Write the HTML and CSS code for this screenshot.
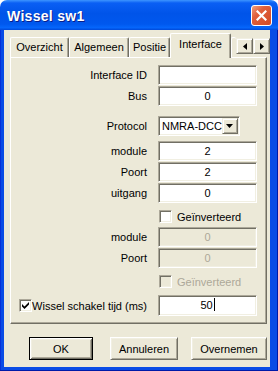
FILE: index.html
```html
<!DOCTYPE html>
<html lang="nl">
<head>
  <meta charset="UTF-8">
  <title>Wissel sw1</title>
  <link rel="stylesheet" href="styles.css">
</head>
<body>
  <div class="window">
    <div class="titlebar">
      <span class="title">Wissel sw1</span>
      <span class="close">
        <svg width="11" height="11" viewBox="0 0 11 11"><path d="M1.5 1.5 L9.5 9.5 M9.5 1.5 L1.5 9.5" stroke="#fff" stroke-width="2.2" stroke-linecap="square"/></svg>
      </span>
    </div>
    <div class="frame">
      <div class="client">
        <div class="tabstrip">
          <div class="tab t1">Overzicht</div>
          <div class="tab t2">Algemeen</div>
          <div class="tab t3">Positie</div>
          <div class="tab active t4">Interface</div>
          <div class="tab t5"></div>
          <div class="spin">
            <span class="spin-btn"><svg width="4" height="7" viewBox="0 0 4 7"><path d="M4 0 L0 3.5 L4 7 Z" fill="#000"/></svg></span>
            <span class="spin-btn"><svg width="4" height="7" viewBox="0 0 4 7"><path d="M0 0 L4 3.5 L0 7 Z" fill="#000"/></svg></span>
          </div>
        </div>

        <div class="panel">
          <div class="row r-id"><label>Interface ID</label><div class="field"></div></div>
          <div class="row r-bus"><label>Bus</label><div class="field">0</div></div>
          <div class="row r-proto">
            <label>Protocol</label>
            <div class="combo">
              <span class="combo-text">NMRA-DCC</span>
              <span class="combo-btn"><svg width="7" height="4" viewBox="0 0 7 4"><path d="M0 0 L7 0 L3.5 4 Z" fill="#000"/></svg></span>
            </div>
          </div>
          <div class="row r-mod"><label>module</label><div class="field">2</div></div>
          <div class="row r-poort"><label>Poort</label><div class="field">2</div></div>
          <div class="row r-uit"><label>uitgang</label><div class="field">0</div></div>
          <div class="row r-cb1"><label></label><div class="check"><span class="box"></span>Geïnverteerd</div></div>
          <div class="row r-mod2"><label>module</label><div class="field disabled">0</div></div>
          <div class="row r-poort2"><label>Poort</label><div class="field disabled">0</div></div>
          <div class="row r-cb2"><label></label><div class="check disabled"><span class="box"></span>Geïnverteerd</div></div>
          <div class="row r-tijd">
            <label class="with-check">
              <span class="box checked"><svg width="7" height="7" viewBox="0 0 7 7"><path d="M0 2 L0 4.5 L2.5 7 L7 2.5 L7 0 L2.5 4.5 Z" fill="#000"/></svg></span>
              <span>Wissel schakel tijd (ms)</span>
            </label>
            <div class="field tall">50<span class="caret"></span></div>
          </div>
        </div>

        <div class="buttons">
          <div class="btn default b-ok">OK</div>
          <div class="btn b-cancel">Annuleren</div>
          <div class="btn b-apply">Overnemen</div>
        </div>
      </div>
    </div>
  </div>
</body>
</html>
```

FILE: styles.css
```css
:root {
  --face: #ece9d8;
  --light: #f1efe2;
  --shadow: #aca899;
  --dark: #716f64;
  --xp-blue: #0a4ce6;
}

body {
  margin: 0;
  padding: 0;
  background: #fff;
  font-family: "Liberation Sans", Arial, sans-serif;
  font-size: 11px;
  color: #000;
}

.window {
  width: 278px;
  height: 371px;
  display: flex;
  flex-direction: column;
}

/* title bar */
.titlebar {
  height: 30px;
  flex: none;
  display: flex;
  align-items: center;
  justify-content: space-between;
  padding: 0 6px 0 7px;
  box-sizing: border-box;
  border-radius: 7px 7px 0 0;
  background: linear-gradient(#3d95ff 0%, #0a5ff4 10%, #0054e9 45%, #0058ee 80%, #0566fb 92%, #0049d9 100%);
}

.title {
  color: #fff;
  font-weight: bold;
  font-size: 14px;
  letter-spacing: 0.3px;
  text-shadow: 1px 1px #0a1e8a;
  margin-top: 1px;
}

.close {
  width: 21px;
  height: 21px;
  box-sizing: border-box;
  border: 1px solid #fff;
  border-radius: 3px;
  background: linear-gradient(135deg, #f0a080 0%, #e0603c 35%, #d24a25 100%);
  display: flex;
  align-items: center;
  justify-content: center;
  margin-top: 1px;
}

/* window frame */
.frame {
  flex: 1;
  display: flex;
  background: var(--xp-blue);
  padding: 0 8px 4px 4px;
  box-shadow: inset -1px -1px #0019a8, inset 1px 0 #0831d9;
}

.client {
  flex: 1;
  background: var(--face);
  display: flex;
  flex-direction: column;
}

/* tabs */
.tabstrip {
  height: 27px;
  display: flex;
  align-items: flex-end;
  padding-left: 6px;
  position: relative;
  z-index: 1;
  white-space: nowrap;
}

.tab {
  height: 20px;
  box-sizing: border-box;
  border-top: 1px solid #fff;
  border-left: 1px solid #fff;
  border-right: 1px solid var(--dark);
  border-radius: 2px 2px 0 0;
  box-shadow: inset -1px 0 var(--shadow);
  padding: 3px 0 0;
  text-align: center;
  background: var(--face);
}

.t1 { width: 59px; }
.t2 { width: 60px; }
.t3 { width: 41px; }
.t4 { width: 61px; }
.t5 { width: 5px; border-right: none; box-shadow: none; }

.tab.active {
  height: 25px;
  padding-top: 4px;
  margin-bottom: -1px;
}

.spin {
  display: flex;
  align-self: flex-start;
  margin-top: 8px;
}

.spin-btn {
  width: 17px;
  height: 16px;
  box-sizing: border-box;
  border: 1px solid;
  border-color: var(--light) var(--dark) var(--dark) var(--light);
  box-shadow: inset 1px 1px #fff, inset -1px -1px var(--shadow);
  display: flex;
  align-items: center;
  justify-content: center;
  background: var(--face);
}

/* panel */
.panel {
  width: 257px;
  height: 267px;
  margin-left: 6px;
  box-sizing: border-box;
  border: 1px solid;
  border-color: #fff var(--dark) var(--dark) #fff;
  box-shadow: inset -1px -1px var(--shadow);
  display: flex;
  flex-direction: column;
  padding-top: 7px;
}

.row {
  display: grid;
  grid-template-columns: 136px 99px;
  column-gap: 11px;
  align-items: center;
  height: 20px;
  margin-top: 1px;
  white-space: nowrap;
}

.row label {
  text-align: right;
}

.r-id { margin-top: 0; }
.r-proto { margin-top: 9px; height: 21px; }
.r-mod { margin-top: 5px; }
.r-cb1 { margin-top: 5px; height: 17px; }
.r-mod2 { margin-top: 2px; }
.r-cb2 { margin-top: 5px; height: 17px; }
.r-tijd { margin-top: 5px; height: 21px; }

.field {
  height: 20px;
  box-sizing: border-box;
  background: #fff;
  border: 1px solid;
  border-color: var(--shadow) #fff #fff var(--shadow);
  box-shadow: inset 1px 1px var(--dark), inset -1px -1px var(--light);
  text-align: center;
  line-height: 18px;
}

.field.tall {
  height: 21px;
  line-height: 19px;
}

.field.disabled {
  background: var(--face);
  color: var(--shadow);
}

.caret {
  display: inline-block;
  width: 1px;
  height: 13px;
  background: #000;
  vertical-align: -2px;
  margin-left: 1px;
}

.combo {
  width: 82px;
  height: 20px;
  box-sizing: border-box;
  background: #fff;
  border: 1px solid;
  border-color: var(--shadow) #fff #fff var(--shadow);
  box-shadow: inset 1px 1px var(--dark), inset -1px -1px var(--light);
  display: flex;
  align-items: center;
  justify-content: space-between;
  padding: 2px;
}

.combo-text {
  padding-left: 1px;
  white-space: nowrap;
}

.combo-btn {
  width: 16px;
  height: 16px;
  flex: none;
  box-sizing: border-box;
  border: 1px solid;
  border-color: var(--light) var(--dark) var(--dark) var(--light);
  box-shadow: inset 1px 1px #fff, inset -1px -1px var(--shadow);
  background: var(--face);
  display: flex;
  align-items: center;
  justify-content: center;
}

/* check boxes */
.check {
  display: flex;
  align-items: center;
  gap: 5px;
  padding-left: 1px;
}

.check.disabled {
  color: var(--shadow);
}

.box {
  width: 13px;
  height: 13px;
  flex: none;
  box-sizing: border-box;
  background: #fff;
  border: 1px solid;
  border-color: var(--shadow) #fff #fff var(--shadow);
  box-shadow: inset 1px 1px var(--dark), inset -1px -1px var(--light);
  display: flex;
  align-items: center;
  justify-content: center;
}

.check.disabled .box {
  background: var(--face);
}

.row label.with-check {
  display: flex;
  align-items: center;
  justify-content: space-between;
  padding-left: 8px;
}

/* buttons */
.buttons {
  display: flex;
  margin-top: 13px;
}

.btn {
  height: 23px;
  box-sizing: border-box;
  border: 1px solid;
  border-color: #fff var(--dark) var(--dark) #fff;
  box-shadow: inset 1px 1px var(--light), inset -1px -1px var(--shadow);
  display: flex;
  align-items: center;
  justify-content: center;
}

.btn.default {
  border-color: #000;
  box-shadow: inset 1px 1px #fff, inset -1px -1px var(--dark), inset 2px 2px var(--light), inset -2px -2px var(--shadow);
}

.b-ok { width: 64px; margin-left: 25px; }
.b-cancel { width: 68px; margin-left: 17px; }
.b-apply { width: 76px; margin-left: 13px; }
```
